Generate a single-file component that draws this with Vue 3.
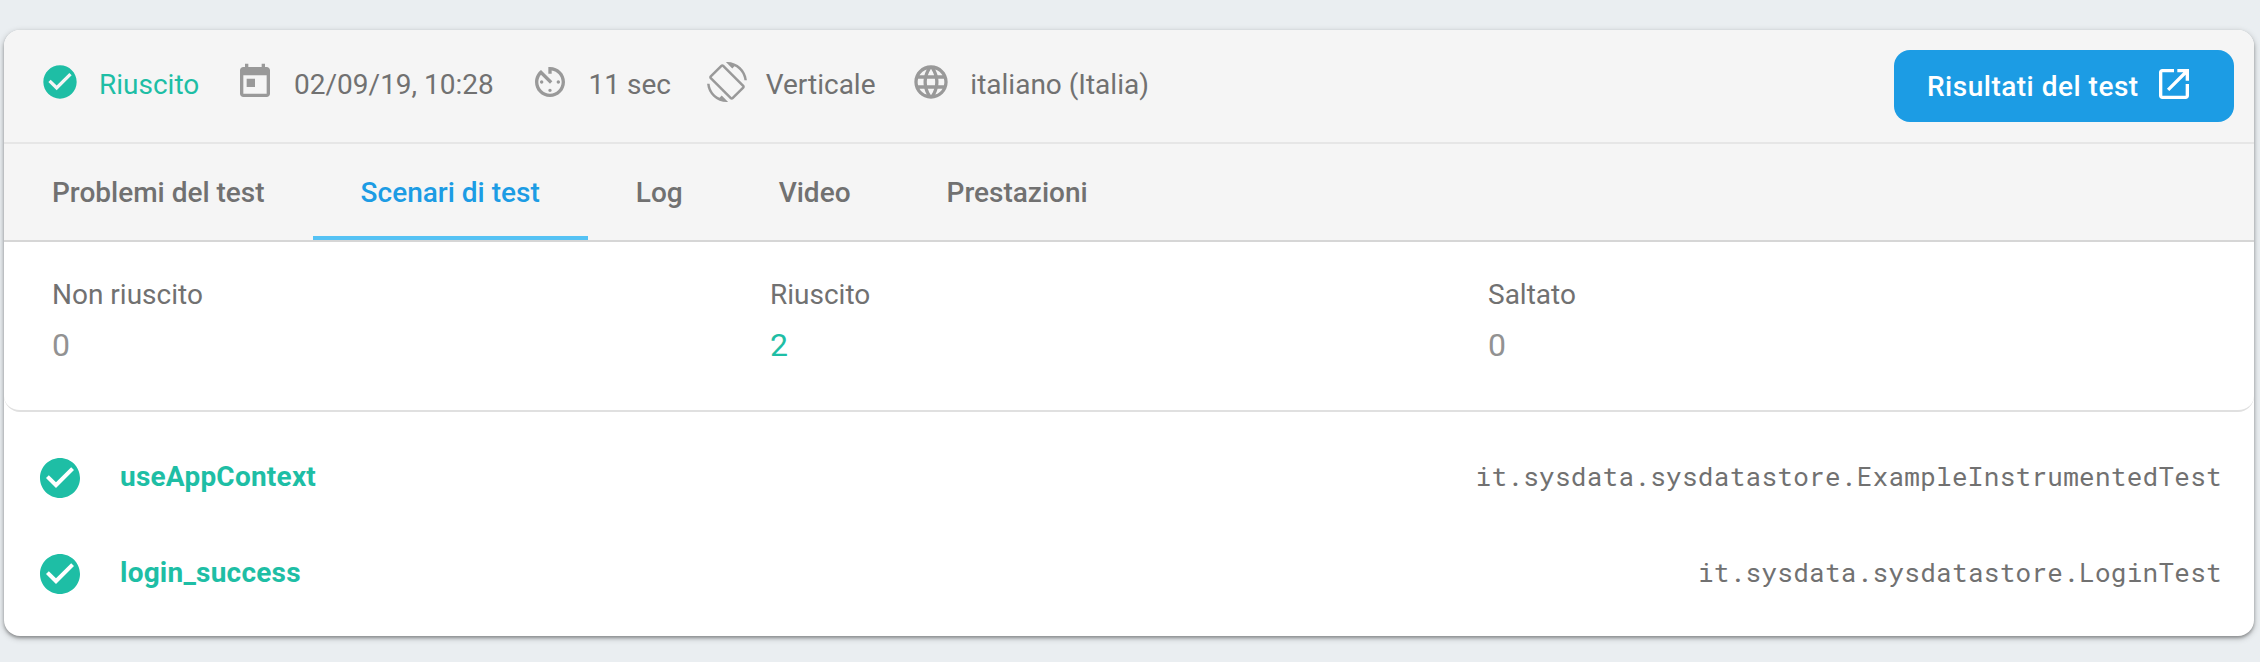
<script setup>
const icons = {
  check: 'M12 2C6.48 2 2 6.48 2 12s4.48 10 10 10 10-4.48 10-10S17.52 2 12 2zm-2 15l-5-5 1.41-1.41L10 14.17l7.59-7.59L19 8l-9 9z',
  today: 'M19 3h-1V1h-2v2H8V1H6v2H5c-1.11 0-1.99.9-1.99 2L3 19c0 1.1.89 2 2 2h14c1.1 0 2-.9 2-2V5c0-1.1-.9-2-2-2zm0 16H5V8h14v11zM7 10h5v5H7z',
  timer: 'M11 17c0 .55.45 1 1 1s1-.45 1-1-.45-1-1-1-1 .45-1 1zm0-14v4h2V5.08c3.39.49 6 3.39 6 6.92 0 3.87-3.13 7-7 7s-7-3.13-7-7c0-1.68.59-3.22 1.58-4.42L12 13l1.41-1.41-6.8-6.8v.02C4.42 6.45 3 9.05 3 12c0 4.97 4.02 9 9 9 4.97 0 9-4.03 9-9s-4.03-9-9-9h-1zm7 9c0-.55-.45-1-1-1s-1 .45-1 1 .45 1 1 1 1-.45 1-1zM6 12c0 .55.45 1 1 1s1-.45 1-1-.45-1-1-1-1 .45-1 1z',
  rotation: 'M16.48 2.52c3.27 1.55 5.61 4.72 5.97 8.48h1.5C23.44 4.84 18.29 0 12 0l-.66.03 3.81 3.81 1.33-1.32zm-6.25-.77c-.59-.59-1.54-.59-2.12 0L1.75 8.11c-.59.59-.59 1.54 0 2.12l12.02 12.02c.59.59 1.54.59 2.12 0l6.36-6.36c.59-.59.59-1.54 0-2.12L10.23 1.75zm4.6 19.44L2.81 9.17l6.36-6.36 12.02 12.02-6.36 6.36zm-7.31.29C4.25 19.94 1.91 16.76 1.55 13H.05C.56 19.16 5.71 24 12 24l.66-.03-3.81-3.81-1.33 1.32z',
  language: 'M11.99 2C6.47 2 2 6.48 2 12s4.47 10 9.99 10C17.52 22 22 17.52 22 12S17.52 2 11.99 2zm6.93 6h-2.95c-.32-1.25-.78-2.45-1.38-3.56 1.84.63 3.37 1.91 4.33 3.56zM12 4.04c.83 1.2 1.48 2.53 1.91 3.96h-3.82c.43-1.43 1.08-2.76 1.91-3.96zM4.26 14C4.1 13.36 4 12.69 4 12s.1-1.36.26-2h3.38c-.08.66-.14 1.32-.14 2 0 .68.06 1.34.14 2H4.26zm.82 2h2.95c.32 1.25.78 2.45 1.38 3.56-1.84-.63-3.37-1.9-4.33-3.56zm2.95-8H5.08c.96-1.66 2.49-2.93 4.33-3.56C8.81 5.55 8.35 6.75 8.03 8zM12 19.96c-.83-1.2-1.48-2.53-1.91-3.96h3.82c-.43 1.43-1.08 2.76-1.91 3.96zM14.34 14H9.66c-.09-.66-.16-1.32-.16-2 0-.68.07-1.35.16-2h4.68c.09.65.16 1.32.16 2 0 .68-.07 1.34-.16 2zm.25 5.56c.6-1.11 1.06-2.31 1.38-3.56h2.95c-.96 1.65-2.49 2.93-4.33 3.56zM16.36 14c.08-.66.14-1.32.14-2 0-.68-.06-1.34-.14-2h3.38c.16.64.26 1.31.26 2s-.1 1.36-.26 2h-3.38z',
  open: 'M19 19H5V5h7V3H5c-1.11 0-2 .9-2 2v14c0 1.1.89 2 2 2h14c1.1 0 2-.9 2-2v-7h-2v7zM14 3v2h3.59l-9.83 9.83 1.41 1.41L19 6.41V10h2V3h-7z',
}
const facts = [
  { icon: icons.check, text: 'Riuscito', passed: true },
  { icon: icons.today, text: '02/09/19, 10:28' },
  { icon: icons.timer, text: '11 sec' },
  { icon: icons.rotation, text: 'Verticale' },
  { icon: icons.language, text: 'italiano (Italia)' },
]
const tabs = ['Problemi del test', 'Scenari di test', 'Log', 'Video', 'Prestazioni']
const activeTab = 'Scenari di test'
const stats = [
  { label: 'Non riuscito', value: 0 },
  { label: 'Riuscito', value: 2, passed: true },
  { label: 'Saltato', value: 0 },
]
const cases = [
  { name: 'useAppContext', suite: 'it.sysdata.sysdatastore.ExampleInstrumentedTest' },
  { name: 'login_success', suite: 'it.sysdata.sysdatastore.LoginTest' },
]
</script>

<template>
  <main class="page">
    <section class="card">
      <header class="summary">
        <div v-for="f in facts" :key="f.text" class="fact" :class="{ passed: f.passed }">
          <svg class="icon" viewBox="0 0 24 24"><path :d="f.icon" /></svg>
          <span>{{ f.text }}</span>
        </div>
        <button class="results">
          <span>Risultati del test</span>
          <svg class="icon" viewBox="0 0 24 24"><path :d="icons.open" /></svg>
        </button>
      </header>
      <nav class="tabs">
        <a v-for="t in tabs" :key="t" class="tab" :class="{ active: t === activeTab }">{{ t }}</a>
      </nav>
      <div class="stats">
        <div v-for="s in stats" :key="s.label" class="stat">
          <div class="label">{{ s.label }}</div>
          <div class="value" :class="{ passed: s.passed }">{{ s.value }}</div>
        </div>
      </div>
      <ul class="cases">
        <li v-for="c in cases" :key="c.name" class="case">
          <svg class="case-icon" viewBox="0 0 24 24"><path :d="icons.check" /></svg>
          <span class="name">{{ c.name }}</span>
          <span class="suite">{{ c.suite }}</span>
        </li>
      </ul>
    </section>
  </main>
</template>

<style>
body {
  background: #eaeef1;
}
</style>

<style scoped>
.page {
  box-sizing: border-box;
  height: 662px;
  padding: 30px 6px 26px 4px;
  font: 400 28px/32px Roboto, "Liberation Sans", sans-serif;
  color: #717171;
  background: #eaeef1;
}
.card {
  height: 606px;
  border-radius: 16px;
  background: #fff;
  box-shadow: 0 2px 6px rgba(0, 0, 0, 0.28), 0 2px 3px rgba(0, 0, 0, 0.24);
}
.summary {
  box-sizing: border-box;
  height: 114px;
  display: flex;
  align-items: flex-start;
  padding: 20px 20px 0 36px;
  border-bottom: 2px solid #e6e6e6;
  border-radius: 16px 16px 0 0;
  background: #f5f5f5;
}
.fact {
  display: flex;
  gap: 19px;
  margin: 12px 35.8px 0 0;
  white-space: nowrap;
}
.fact span {
  padding-top: 7px;
}
.icon {
  flex: none;
  width: 40px;
  height: 40px;
  fill: #999;
}
.passed,
.passed .icon {
  color: #1ebea5;
  fill: #1ebea5;
}
.results {
  display: flex;
  box-sizing: border-box;
  width: 340px;
  height: 72px;
  margin-left: auto;
  padding: 14px 0 0 33px;
  gap: 15px;
  border: 0;
  border-radius: 16px;
  background: #1c9ce4;
  color: #fff;
  font: 500 28px/32px Roboto, "Liberation Sans", sans-serif;
  letter-spacing: 0.5px;
  white-space: nowrap;
}
.results span {
  padding-top: 7px;
}
.results .icon {
  fill: #fff;
}
.tabs {
  display: flex;
  height: 96px;
  border-bottom: 2px solid #d6d6d6;
  background: #f5f5f5;
}
.tab {
  box-sizing: border-box;
  padding: 33px 48px 0;
  font-weight: 500;
  border-bottom: 4px solid transparent;
  white-space: nowrap;
}
.tab.active {
  color: #1c9ce4;
  border-color: #55c2f4;
}
.stats {
  box-sizing: border-box;
  height: 170px;
  display: grid;
  grid-template-columns: repeat(3, 1fr);
  padding: 37px 48px 0;
  border-bottom: 2px solid #e0e0e0;
  border-radius: 0 0 16px 16px;
}
.value {
  margin-top: 14px;
  font-size: 32px;
  line-height: 40px;
  color: #929292;
}
.value.passed {
  color: #1ebea5;
}
.cases {
  list-style: none;
  margin: 0;
  padding: 18px 32px 0;
}
.case {
  display: flex;
  align-items: center;
  height: 96px;
}
.case-icon {
  width: 48px;
  height: 48px;
  margin-right: 36px;
  fill: #1ebea5;
}
.name {
  padding-bottom: 2px;
  font-weight: 700;
  letter-spacing: 0.22px;
  color: #1ebea5;
}
.suite {
  margin-left: auto;
  padding-bottom: 4px;
  font-family: "Roboto Mono", "DejaVu Sans Mono", monospace;
  font-size: 26px;
  letter-spacing: 0.28px;
}
</style>
